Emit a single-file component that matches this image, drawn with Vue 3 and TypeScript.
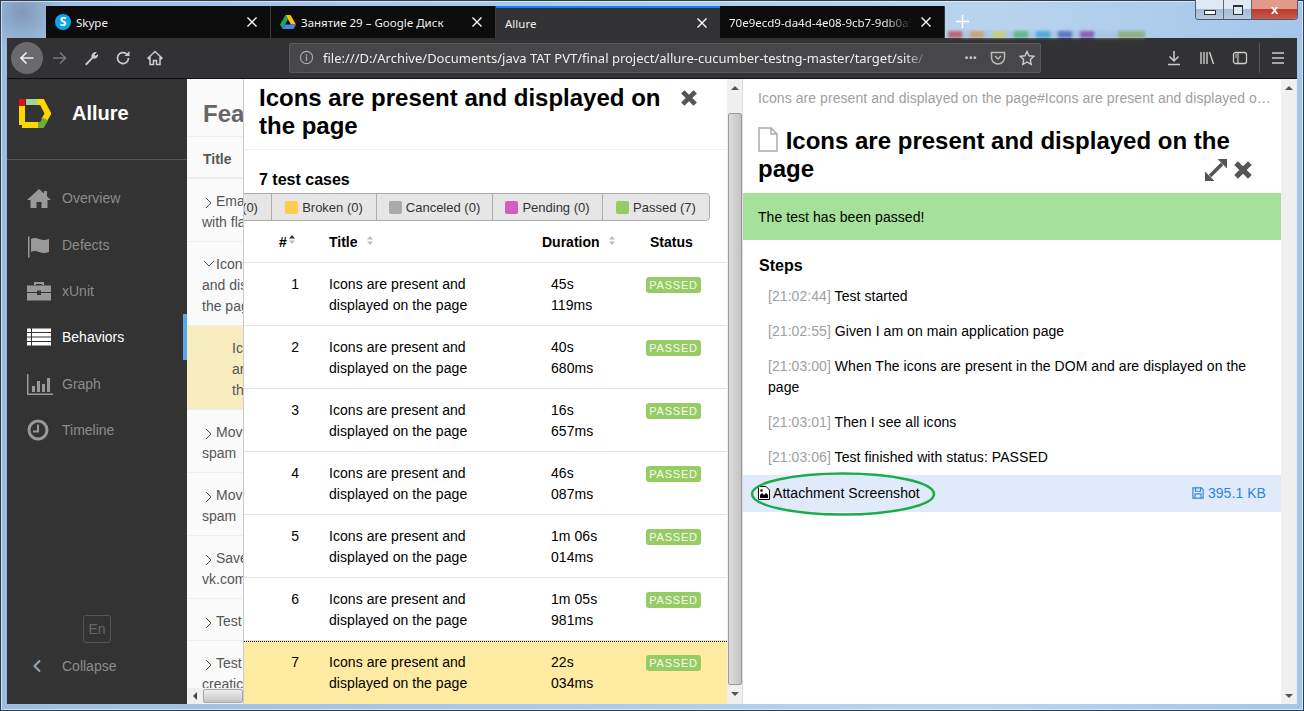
<script setup lang="ts">
const tabs = [
  { title: 'Skype', icon: 'skype', width: 225 },
  { title: 'Занятие 29 – Google Диск', icon: 'drive', width: 225 },
  { title: 'Allure', icon: '', width: 224, active: true },
  { title: '70e9ecd9-da4d-4e08-9cb7-9db0a54', icon: '', width: 225, fade: true },
]
const navItems = [
  { label: 'Overview', icon: 'M12 3 0 14h3.500v8h6v-6h5v6h6v-8H24l-4-3.700V5h-3v2.500z' },
  { label: 'Defects', icon: 'M1 3.500h1.500v21H1zM4 6c6-3.500 10 3.500 18 0v13c-8 3.500-12-3.500-18 0z' },
  { label: 'xUnit', icon: 'M7 6V3h10v3h-2V5H9v1zM0 6.500h24V13H14v-1.500h-4V13H0zM0 14h10v2h4v-2h10v7.500H0z' },
  { label: 'Behaviors', icon: 'M0 3.500h4V7H0zM5 3.500h19V7H5zM0 8h4v3.500H0zM5 8h19v3.500H5zM0 12.500h4V16H0zM5 12.500h19V16H5zM0 17h4v3.500H0zM5 17h19v3.500H5z', active: true },
  { label: 'Graph', icon: 'M0 2h1.500v19.500H26V23H0zM5 14h3v6H5zM10 9h3v11h-3zM15 12h3v8h-3zM20 6h3v14h-3z' },
  { label: 'Timeline', icon: 'M11 1.500a10.500 10.500 0 1 0 0 21 10.500 10.500 0 0 0 0-21zm0 3a7.500 7.500 0 1 1 0 15 7.500 7.500 0 0 1 0-15zm-1 2v6H6v2h6v-8z' },
]
const features = [
  { lines: ['Ema', 'with fla'], h: 63, arrow: '>' },
  { lines: ['Icons', 'and dis', 'the pag'], h: 84, arrow: 'v' },
  { lines: ['Ic', 'ar', 'th'], h: 84, selected: true },
  { lines: ['Move', 'spam'], h: 63, arrow: '>' },
  { lines: ['Move', 'spam'], h: 63, arrow: '>' },
  { lines: ['Save', 'vk.com'], h: 63, arrow: '>' },
  { lines: ['Test'], h: 42, arrow: '>' },
  { lines: ['Test', 'creatic'], h: 63, arrow: '>' },
]
const statuses = [
  { label: '(0)', color: '', width: 42 },
  { label: 'Broken (0)', color: '#ffcc4d', width: 105 },
  { label: 'Canceled (0)', color: '#aaaaaa', width: 116 },
  { label: 'Pending (0)', color: '#d35ebe', width: 110 },
  { label: 'Passed (7)', color: '#97cc64', width: 107 },
]
const cases = [
  { n: 1, d: '45s 119ms' },
  { n: 2, d: '40s 680ms' },
  { n: 3, d: '16s 657ms' },
  { n: 4, d: '46s 087ms' },
  { n: 5, d: '1m 06s 014ms' },
  { n: 6, d: '1m 05s 981ms' },
  { n: 7, d: '22s 034ms', selected: true },
]
const steps = [
  { t: '[21:02:44]', s: 'Test started' },
  { t: '[21:02:55]', s: 'Given I am on main application page' },
  { t: '[21:03:00]', s: 'When The icons are present in the DOM and are displayed on the page' },
  { t: '[21:03:01]', s: 'Then I see all icons' },
  { t: '[21:03:06]', s: 'Test finished with status: PASSED' },
]
const title = 'Icons are present and displayed on the page'
</script>

<template>
  <div class="win">
    <div class="winbtns">
      <span class="wb"><i class="min"></i></span>
      <span class="wb"><i class="max"></i></span>
      <span class="wb close">x</span>
    </div>
    <div class="blobs"></div>
    <div class="tabbar">
      <div
        v-for="t in tabs"
        :key="t.title"
        class="tab"
        :class="{ active: t.active }"
        :style="{ width: t.width + 'px' }"
      >
        <span v-if="t.icon === 'skype'" class="skype">S</span>
        <svg v-if="t.icon === 'drive'" class="fav" viewBox="0 0 16 16">
          <path d="M5.500 1h5L16 10.500h-5z" fill="#ffc107" />
          <path d="M5.500 1 0 10.500 2.500 15 8 5.500z" fill="#1ea362" />
          <path d="M5 10.500h11L13.500 15h-11z" fill="#4285f4" />
        </svg>
        <span class="tabtitle" :class="{ fade: t.fade }">{{ t.title }}</span>
        <svg class="x" viewBox="0 0 12 12"><path d="M1.500 1.500l9 9M10.500 1.500l-9 9" stroke="#fff" stroke-width="1.400" /></svg>
      </div>
      <svg class="plus" viewBox="0 0 16 16"><path d="M8 1v14M1 8h14" stroke="#fff" stroke-width="1.600" /></svg>
    </div>

    <div class="toolbar">
      <span class="back">
        <svg viewBox="0 0 16 16"><path d="M14.500 8h-12M7.500 2.500 2 8l5.500 5.500" fill="none" stroke="#eee" stroke-width="1.700" /></svg>
      </span>
      <svg class="ti dim" viewBox="0 0 16 16"><path d="M15 8H2M9 2.500 14.500 8 9 13.500" fill="none" stroke="#777" stroke-width="1.700" /></svg>
      <svg class="ti" viewBox="0 0 16 16"><path d="M2 14l6.500-6.500C8 4.500 10 1.500 14 2l-2.500 2.500 1 1.500L15 4c.5 3-2 5.500-5 4.500L3.500 15.500z" fill="#ccc" /></svg>
      <svg class="ti" viewBox="0 0 16 16"><path d="M13.500 8A5.500 5.500 0 1 1 11.500 3.800" fill="none" stroke="#ccc" stroke-width="1.700" /><path d="M14.500 1v5h-5z" fill="#ccc" /></svg>
      <svg class="ti" viewBox="0 0 16 16"><path d="M8 1.500 1 8l1 1 1-1v6.500h3.500v-4h3v4H13V8l1 1 1-1z" fill="none" stroke="#ccc" stroke-width="1.500" /></svg>
      <div class="urlbar">
        <svg class="info" viewBox="0 0 16 16"><circle cx="8" cy="8" r="6.500" fill="none" stroke="#aaa" stroke-width="1.200" /><path d="M8 7v4.500M8 4.500v1.500" stroke="#aaa" stroke-width="1.500" /></svg>
        <span class="url">file:///D:/Archive/Documents/java TAT PVT/final project/allure-cucumber-testng-master/target/site/</span>
        <span class="dots">•••</span>
        <svg class="ui" viewBox="0 0 16 16"><path d="M1.500 2.500h13v5a6.500 6.500 0 0 1-13 0z" fill="none" stroke="#bbb" stroke-width="1.500" /><path d="M5 6l3 3 3-3" fill="none" stroke="#bbb" stroke-width="1.500" /></svg>
        <svg class="ui" viewBox="0 0 16 16"><path d="M8 1.500l2 4.300 4.700.6-3.400 3.200.9 4.700L8 12l-4.200 2.300.9-4.700L1.300 6.400 6 5.800z" fill="none" stroke="#ccc" stroke-width="1.400" /></svg>
      </div>
      <div class="rightools">
        <svg class="ti" viewBox="0 0 16 16"><path d="M8 1v9.500M3.500 6.500 8 11l4.500-4.500M2 14.500h12" fill="none" stroke="#ccc" stroke-width="1.500" /></svg>
        <svg class="ti" viewBox="0 0 16 16"><path d="M2 2v12M5 2v12M8 2v12M10.500 2l4 12" fill="none" stroke="#ccc" stroke-width="1.400" /></svg>
        <svg class="ti" viewBox="0 0 16 16"><rect x="1.500" y="2.500" width="13" height="11" rx="2" fill="none" stroke="#ccc" stroke-width="1.300" /><path d="M6 3v10M3 5h2M3 7h2" stroke="#ccc" stroke-width="1.200" /></svg>
        <span class="tsep"></span>
        <svg class="ti" viewBox="0 0 16 16"><path d="M2 3h12M2 8h12M2 13h12" stroke="#ccc" stroke-width="1.500" /></svg>
      </div>
    </div>

    <div class="content">
      <aside class="side">
        <div class="brand">
          <svg class="logo" viewBox="0 0 32 29">
            <path d="M3 26V6" fill="none" stroke="#ffd700" stroke-width="6" />
            <path d="M3 0v7" fill="none" stroke="#e01010" stroke-width="6" />
            <path d="M7 3h12" fill="none" stroke="#a3d39c" stroke-width="6" />
            <path d="M18 3h5l6 11.500-4 7" fill="none" stroke="#ffd700" stroke-width="6" />
            <path d="M3 26h16" fill="none" stroke="#ffd700" stroke-width="6" />
            <path d="M19 26h4l3.500-6" fill="none" stroke="#6cae35" stroke-width="6" />
          </svg>
          <span class="brandname">Allure</span>
        </div>
        <nav class="nav">
          <div v-for="n in navItems" :key="n.label" class="navitem" :class="{ active: n.active }">
            <svg class="navicon" viewBox="0 0 24 24"><path :d="n.icon" fill="currentColor" fill-rule="evenodd" /></svg>
            <span>{{ n.label }}</span>
          </div>
        </nav>
        <div class="sidefoot">
          <span class="lang">En</span>
          <div class="collapse">
            <svg class="chev" viewBox="0 0 10 14"><path d="M8 1.500 2.500 7 8 12.500" fill="none" stroke="#9ab" stroke-width="2" /></svg>
            <span>Collapse</span>
          </div>
        </div>
      </aside>

      <section class="features">
        <h2 class="fh">Features by stories</h2>
        <div class="fcol">Title</div>
        <div class="frows">
          <div
            v-for="(f, i) in features"
            :key="i"
            class="frow"
            :class="{ selected: f.selected }"
            :style="{ height: f.h + 'px' }"
          >
            <div v-for="(l, j) in f.lines" :key="j" class="fline" :class="{ ind: j === 0 && f.arrow === '>', indv: j === 0 && f.arrow === 'v', inset: f.selected }">
              <svg v-if="j === 0 && f.arrow === '>'" class="arr" viewBox="0 0 7 12"><path d="M1 1l5 5-5 5" fill="none" stroke="#555" /></svg>
              <svg v-if="j === 0 && f.arrow === 'v'" class="arr v" viewBox="0 0 12 7"><path d="M1 1l5 5 5-5" fill="none" stroke="#555" /></svg>
              {{ l }}
            </div>
          </div>
        </div>
        <div class="hscroll"><span class="harrow"></span><span class="hthumb"></span></div>
      </section>

      <section class="mid">
        <div class="midbody">
          <header class="midhead">
            <h2>{{ title }}</h2>
            <svg class="bigx" viewBox="0 0 16 16"><path d="M2.500 2.500l11 11M13.500 2.500l-11 11" stroke="#555" stroke-width="4.200" /></svg>
          </header>
          <div class="count">7 test cases</div>
          <div class="stwrap">
            <div class="stgroup">
              <div v-for="s in statuses" :key="s.label" class="st" :style="{ width: s.width + 'px' }">
                <i v-if="s.color" class="sw" :style="{ background: s.color }"></i>{{ s.label }}
              </div>
            </div>
          </div>
          <div class="thead trow">
            <div class="c-n">#<svg class="sort first" viewBox="0 0 6 9"><path d="M3 0l3 3.500H0z" fill="#333" /><path d="M3 9 0 5.500h6z" fill="#bbb" /></svg></div>
            <div>Title<svg class="sort" viewBox="0 0 6 9"><path d="M3 0l3 3.500H0z" fill="#bbb" /><path d="M3 9 0 5.500h6z" fill="#bbb" /></svg></div>
            <div>Duration<svg class="sort" viewBox="0 0 6 9"><path d="M3 0l3 3.500H0z" fill="#bbb" /><path d="M3 9 0 5.500h6z" fill="#bbb" /></svg></div>
            <div class="c-st">Status</div>
          </div>
          <div v-for="c in cases" :key="c.n" class="trow tr" :class="{ selected: c.selected }">
            <div class="num">{{ c.n }}</div>
            <div class="tt">{{ title }}</div>
            <div class="dur">{{ c.d }}</div>
            <div><span class="badge">PASSED</span></div>
          </div>
        </div>
        <div class="vscroll">
          <span class="up-a"></span>
          <span class="thumb"></span>
          <span class="dn-a"></span>
        </div>
      </section>

      <section class="right">
        <div class="rbody">
          <div class="crumb">Icons are present and displayed on the page#Icons are present and displayed on the page</div>
          <div class="rhead">
            <h2>
              <svg class="fileic" viewBox="0 0 20 25"><path d="M1 1h12l6 6v17H1zM13 1v6h6" fill="none" stroke="#aaa" stroke-width="1.500" /></svg>
              {{ title }}
            </h2>
            <div class="ricons">
              <svg viewBox="0 0 22 22"><path d="M5 17 17 5" stroke="#555" stroke-width="3.500" /><path d="M12.500 0H22v9.500zM0 12.500V22h9.500z" fill="#555" /></svg>
              <svg viewBox="0 0 16 16"><path d="M2.500 2.500l11 11M13.500 2.500l-11 11" stroke="#555" stroke-width="4.200" /></svg>
            </div>
          </div>
          <div class="banner">The test has been passed!</div>
          <h3 class="stepsh">Steps</h3>
          <div v-for="s in steps" :key="s.t" class="step"><span class="time">{{ s.t }}</span> {{ s.s }}</div>
          <div class="attach">
            <span class="attl">
              <svg class="imgic" viewBox="0 0 12 14"><path d="M.5.500h7.500l3.500 3.500v9.500H.5z" fill="#fff" stroke="#000" /><path d="M2 12V9l2-2 2 2 2-2 2 2v3z" fill="#000" /><circle cx="3.500" cy="4.500" r="1.200" /></svg>
              Attachment Screenshot
            </span>
            <span class="size">
              <svg class="save" viewBox="0 0 14 14"><path d="M1 1h10l2 2v10H1zM4 1v4h6V1M3.500 13V8h7v5" fill="none" stroke="#2b85dd" stroke-width="1.300" /></svg>
              395.1 KB
            </span>
            <svg class="ellipse" viewBox="0 0 186 44"><ellipse cx="93" cy="22" rx="91" ry="20.500" fill="none" stroke="#1aab4b" stroke-width="2.500" /></svg>
          </div>
        </div>
        <div class="vscroll light">
          <span class="up-a"></span>
          <span class="dn-a"></span>
        </div>
      </section>
    </div>
  </div>
</template>

<style scoped>
.win {
  width: 1304px;
  height: 711px;
  position: relative;
  overflow: hidden;
  display: flex;
  flex-direction: column;
  background:
    radial-gradient(circle at 22px 12px, #8298b8 0, #90aed0 22px, transparent 40px),
    linear-gradient(90deg, #9cbde2, #b9d4ee 75%, #a4c6ea);
  background-size: 100% 100%;
  box-shadow: inset 0 0 0 1px #2c3d50, inset 0 0 0 2px rgba(255, 255, 255, .55);
  font-family: "Liberation Sans", Arial, sans-serif;
  font-size: 14px;
  color: #000;
}
.blobs {
  position: absolute;
  left: 948px;
  top: 31px;
  width: 197px;
  height: 7px;
  filter: blur(1.500px);
  opacity: .8;
  background: linear-gradient(90deg, #b84a5c 0 14px, #a8c4e0 14px 22px, #c79a66 22px 36px, #a8c4e0 36px 44px, #c8cf62 44px 58px, #a8c4e0 58px 66px, #4fae74 66px 80px, #a8c4e0 80px 88px, #3f9ed0 88px 102px, #a8c4e0 102px 110px, #4a64b8 110px 124px, #a8c4e0 124px 132px, #7a4aa8 132px 146px, #a8c4e0 146px 170px, #8aa86a 170px 197px);
}
.winbtns {
  position: absolute;
  top: 0;
  right: 6px;
  width: 103px;
  height: 20px;
  display: flex;
  border: 1px solid #4b5d70;
  border-top: 0;
  border-radius: 0 0 4px 4px;
  overflow: hidden;
  box-sizing: border-box;
}
.wb {
  flex: 0 0 27px;
  background: linear-gradient(#dfe9f3 45%, #a6bcd4 50%, #b6cadf);
  border-right: 1px solid #5a6b7c;
  display: flex;
  align-items: center;
  justify-content: center;
}
.wb.close {
  flex: 1;
  border: 0;
  background: linear-gradient(#e29a8a 45%, #bd3a2d 50%, #c85a48);
  color: #fff;
  font-weight: bold;
  font-size: 13px;
}
.min { width: 10px; height: 3px; border: 1px solid #333; background: #fff; margin-top: 6px; }
.max { width: 8px; height: 7px; border: 1px solid #333; border-top-width: 2px; background: #dfe9f3; }
.tabbar {
  height: 38px;
  box-sizing: border-box;
  padding: 6px 0 0 46px;
  display: flex;
}
.tab {
  height: 32px;
  box-sizing: border-box;
  display: flex;
  align-items: center;
  padding: 0 12px 0 9px;
  gap: 5px;
  background: #0c0c0d;
  color: #f0f0f0;
  font-family: "Noto Sans", sans-serif;
  font-size: 11.500px;
  border-right: 1px solid #3a3a3c;
  flex: none;
}
.tab.active {
  background: #323234;
  border-top: 2px solid #0a84ff;
  border-right: 0;
}
.skype {
  width: 16px;
  height: 16px;
  border-radius: 50%;
  background: #10a5e8;
  color: #fff;
  font-size: 12px;
  font-weight: bold;
  text-align: center;
  line-height: 16px;
  flex: none;
}
.fav { width: 16px; height: 16px; flex: none; }
.tabtitle { flex: 1; white-space: nowrap; overflow: hidden; }
.tabtitle.fade { -webkit-mask-image: linear-gradient(90deg, #000 85%, transparent); mask-image: linear-gradient(90deg, #000 85%, transparent); }
.x { width: 12px; height: 12px; flex: none; margin-left: 3px; }
.plus { width: 15px; height: 15px; margin: 8px 0 0 10px; }
.toolbar {
  height: 41px;
  box-sizing: border-box;
  flex: none;
  background: #323234;
  border-bottom: 1px solid #111;
  display: flex;
  align-items: center;
  margin-left: 7px;
  margin-right: 7px;
  padding: 0 0 1px 4px;
}
.back {
  width: 32px;
  height: 32px;
  border-radius: 50%;
  background: #6a6a6c;
  display: flex;
  align-items: center;
  justify-content: center;
  margin-right: 8px;
  flex: none;
}
.back svg { width: 16px; height: 16px; }
.ti { width: 16px; height: 16px; margin-right: 16px; flex: none; }
.urlbar {
  width: 752px;
  height: 30px;
  box-sizing: border-box;
  background: #474749;
  border: 1px solid #5a5a5c;
  border-radius: 2px;
  margin-left: 110px;
  display: flex;
  align-items: center;
  padding: 0 5px 0 9px;
  color: #eee;
  font-family: "Noto Sans", sans-serif;
  font-size: 13px;
  flex: none;
}
.info { width: 15px; height: 15px; flex: none; margin-right: 9px; }
.url { width: 606px; white-space: nowrap; overflow: hidden; flex: none; -webkit-mask-image: linear-gradient(90deg, #000 96%, transparent); mask-image: linear-gradient(90deg, #000 96%, transparent); }
.dots { margin-left: auto; font-size: 11px; color: #ccc; }
.ui { width: 16px; height: 16px; margin-left: 13px; flex: none; }
.rightools { display: flex; align-items: center; margin-left: 125px; }
.rightools .ti { margin-right: 17px; }
.tsep { width: 1px; height: 30px; background: #555; margin: 0 10px 0 -6px; }
.content { flex: 1; min-height: 0; display: flex; margin: 0 7px 7px 7px; background: #fff; }
.side {
  width: 180px;
  flex: none;
  background: #333;
  color: #999;
  display: flex;
  flex-direction: column;
}
.brand {
  height: 81px;
  flex: none;
  box-sizing: border-box;
  border-bottom: 1px solid #555;
  display: flex;
  align-items: center;
  padding: 0 0 11px 12px;
}
.logo { width: 32px; height: 29px; flex: none; }
.brandname { color: #fff; font-weight: bold; font-size: 20px; margin-left: 21px; }
.nav { padding-top: 15.300px; }
.navitem {
  height: 46.300px;
  display: flex;
  align-items: center;
  padding-left: 20px;
  gap: 11px;
  box-sizing: border-box;
  color: #8b8b8b;
}
.navitem.active { color: #fff; border-right: 4px solid #5ba6e8; }
.navicon { width: 24px; height: 24px; color: #999; flex: none; overflow: visible; }
.active .navicon { color: #fff; }
.sidefoot { margin-top: auto; padding-bottom: 30px; display: flex; flex-direction: column; align-items: flex-start; }
.lang {
  width: 28px;
  height: 28px;
  box-sizing: border-box;
  margin-left: 76px;
  border: 1px solid #555;
  border-radius: 3px;
  color: #666;
  text-align: center;
  line-height: 26px;
}
.collapse { display: flex; align-items: center; margin-top: 15px; padding-left: 25px; color: #8b8b8b; }
.chev { width: 10px; height: 14px; margin-right: 20px; }

.features {
  width: 56px;
  flex: none;
  overflow: hidden;
  background: #fafafa;
  color: #555;
  position: relative;
  display: flex;
  flex-direction: column;
}
.fh { margin: 0; height: 58px; box-sizing: border-box; padding: 21px 0 0 16px; font-size: 24px; line-height: 28px; white-space: nowrap; border-bottom: 1px solid #eee; color: #666; }
.fcol { height: 42px; box-sizing: border-box; padding: 14px 0 0 16px; font-weight: bold; border-bottom: 2px solid #eee; }
.frows { flex: 1; min-height: 0; overflow: hidden; }
.frow { box-sizing: border-box; padding: 12px 0 0 15px; border-bottom: 1px solid #eee; white-space: nowrap; line-height: 21px; overflow: hidden; }
.frow.selected { background: #f8edc1; }
.fline.inset { padding-left: 30px; }
.fline { position: relative; color: #555; }
.fline.ind { padding-left: 14px; }
.fline.indv { padding-left: 14px; }
.arr { position: absolute; left: 3px; top: 6px; width: 7px; height: 12px; }
.arr.v { left: 1px; top: 6px; width: 12px; height: 7px; }
.hscroll {
  position: absolute;
  left: 0;
  right: 0;
  bottom: 0;
  height: 16px;
  background: #f0f0f0;
  display: flex;
  align-items: center;
}
.harrow { width: 0; height: 0; margin: 0 6px 0 6px; border: 4px solid transparent; border-left: 0; border-right: 4px solid #444; }
.hthumb { flex: 1; height: 14px; background: linear-gradient(#eee, #c4c4c4); border: 1px solid #aaa; border-radius: 2px; box-sizing: border-box; }

.mid {
  width: 499px;
  flex: none;
  display: flex;
  background: #fff;
  border-left: 1px solid #ccc;
  box-sizing: border-box;
}
.midbody { flex: 1; min-width: 0; overflow: hidden; }
.midhead {
  height: 71px;
  box-sizing: border-box;
  display: flex;
  align-items: flex-start;
  justify-content: space-between;
  padding: 5px 29px 0 15px;
  border-bottom: 1px solid #eee;
}
.midhead h2 { margin: 0; font-size: 24px; line-height: 28px; width: 420px; font-weight: bold; }
.bigx { width: 18px; height: 18px; margin-top: 5px; flex: none; }
.count { font-size: 16px; font-weight: bold; padding: 21px 0 0 15px; height: 43px; box-sizing: border-box; line-height: 18px; }
.stwrap { display: flex; justify-content: flex-end; padding-right: 17px; overflow: hidden; height: 28px; }
.stgroup {
  display: flex;
  flex: none;
  height: 28px;
  box-sizing: border-box;
  background: #e6e6e6;
  border: 1px solid #adadad;
  border-radius: 0 4px 4px 0;
  font-size: 13px;
}
.st {
  display: flex;
  align-items: center;
  justify-content: center;
  box-sizing: border-box;
  border-left: 1px solid #adadad;
  color: #333;
  white-space: nowrap;
}
.st:first-child { border-left: 0; }
.sw { width: 13px; height: 13px; border-radius: 2px; margin-right: 4px; }
.trow {
  display: grid;
  grid-template-columns: 85px 213px 104px 1fr;
}
.thead {
  height: 41px;
  align-items: center;
  font-weight: bold;
  border-bottom: 1px solid #e4e4e4;
}
.c-n { padding-left: 35px; }
.c-st { padding-left: 4px; }
.sort { width: 6px; height: 9px; margin-left: 9px; vertical-align: 2px; }
.sort.first { margin-left: 2px; vertical-align: 3px; }
.tr {
  height: 63px;
  box-sizing: border-box;
  padding-top: 11px;
  line-height: 21px;
  letter-spacing: .06px;
  border-bottom: 1px solid #e4e4e4;
}
.tr.selected { background: #ffeba1; border-top: 1px dotted #000; border-bottom: 0; padding-top: 10px; }
.num { text-align: right; padding-right: 30px; }
.tt { width: 165px; }
.dur { padding-left: 9px; width: 60px; }
.badge {
  display: inline-block;
  height: 16px;
  width: 55px;
  text-align: center;
  background: #97cc64;
  color: #f6fbf0;
  font-size: 11px;
  letter-spacing: .8px;
  line-height: 16px;
  border-radius: 3px;
  vertical-align: top;
  margin-top: 3px;
}
.vscroll {
  width: 15px;
  flex: none;
  background: #f0f0f0;
  display: flex;
  flex-direction: column;
  align-items: center;
  position: relative;
}
.up-a, .dn-a { height: 17px; flex: none; display: flex; }
.up-a::before, .dn-a::before { content: ""; margin: auto; border: 4px solid transparent; border-top: 0; border-bottom: 4px solid #555; }
.dn-a::before { border-bottom: 0; border-top: 4px solid #555; }
.thumb { margin-top: 17px; height: 572px; width: 14px; background: linear-gradient(90deg, #ddd, #c4c4c4); border: 1px solid #999; box-sizing: border-box; flex: none; border-radius: 2px; }
.vscroll.light { justify-content: space-between; width: 16px; }

.right { flex: 1; min-width: 0; display: flex; border-left: 1px solid #ddd; }
.rbody { flex: 1; min-width: 0; position: relative; letter-spacing: .06px; }
.crumb {
  color: #a0a0a0;
  padding: 10px 5px 0 15px;
  line-height: 18px;
  white-space: nowrap;
  overflow: hidden;
  text-overflow: ellipsis;
  height: 35px;
  box-sizing: border-box;
}
.rhead { position: relative; padding: 13px 14px 0 15px; height: 79px; box-sizing: border-box; letter-spacing: 0; }
.rhead h2 { margin: 0; font-size: 24px; line-height: 28px; font-weight: bold; }
.fileic { width: 20px; height: 25px; vertical-align: -3px; margin-right: 1px; }
.ricons { position: absolute; right: 28px; top: 45px; display: flex; align-items: center; gap: 6px; }
.ricons svg { width: 20px; height: 20px; }
.ricons svg:first-child { width: 22px; height: 22px; }
.banner { background: #a6e19b; height: 47px; line-height: 48px; padding-left: 15px; }
.stepsh { margin: 0; font-size: 16px; font-weight: bold; padding: 17px 0 0 16px; height: 38px; box-sizing: border-box; line-height: 18px; letter-spacing: 0; }
.step { padding: 8px 24px 6px 25px; line-height: 21px; }
.time { color: #a0a0a0; }
.attach {
  position: relative;
  background: #e1eafa;
  height: 37px;
  margin-top: 1px;
  box-sizing: border-box;
  display: flex;
  align-items: center;
  justify-content: space-between;
  padding: 0 15px 2px 15px;
}
.attl { display: flex; align-items: center; gap: 3px; }
.imgic { width: 12px; height: 14px; }
.size { color: #2b85dd; display: flex; align-items: center; gap: 4px; }
.save { width: 12px; height: 12px; }
.ellipse { position: absolute; left: 7px; top: -3px; width: 186px; height: 44px; pointer-events: none; }
</style>

<style>
html, body { margin: 0; padding: 0; overflow: hidden; }
</style>
